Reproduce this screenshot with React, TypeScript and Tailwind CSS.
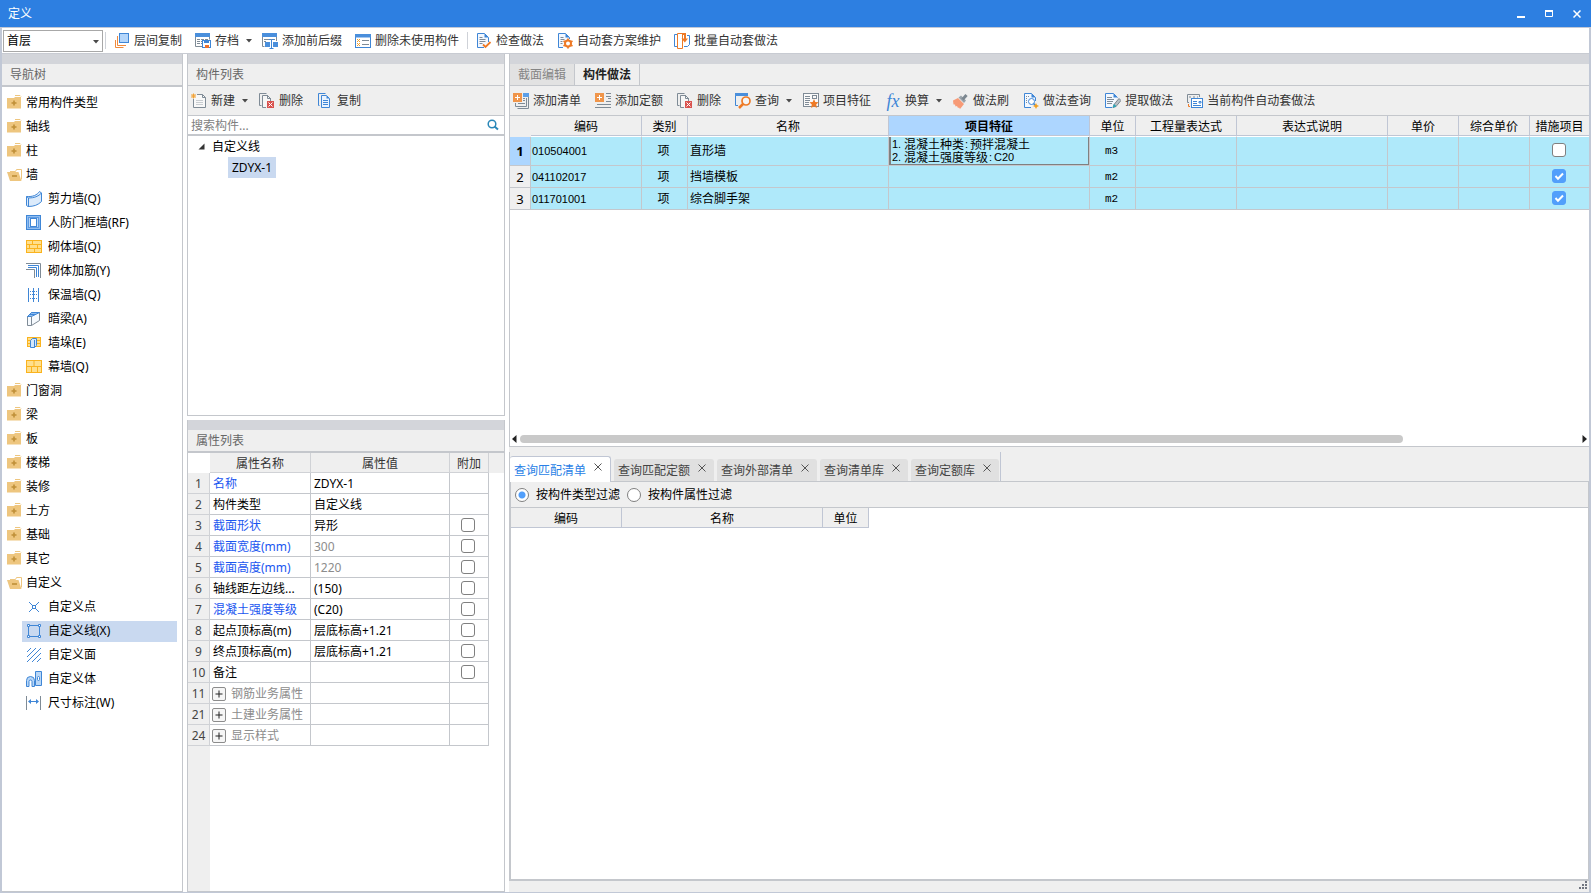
import React, { useState } from 'react';

const BLUE = '#3f86d6';
const GRAY = '#7f8b96';
const ORANGE = '#f08a3c';

type IconProps = { children: React.ReactNode; size?: number };

function Icon({ children, size = 16 }: IconProps) {
  return (
    <svg width={size} height={size} viewBox="0 0 16 16" fill="none" className="shrink-0" aria-hidden="true">
      {children}
    </svg>
  );
}

/* ---------- toolbar icons ---------- */

const LayerCopyIcon = () => (
  <Icon>
    <path d="M3.500 3v9.500h8.500M1.500 7v7.500h8" stroke={ORANGE} />
    <rect x="5.500" y="0.500" width="9" height="9" fill="#b4d6fb" stroke={BLUE} />
  </Icon>
);

const ArchiveIcon = () => (
  <Icon>
    <path d="M0 0h15v4H0z" fill="#4a8fdc" />
    <path d="M0.500 4v9.500h7M14.500 4v2.500" stroke={GRAY} />
    <path d="M2 6.500h3M6 6.500h3M10 6.500h3M2 8.500h3M2 10.500h3M6 8.500h1M6 10.500h1" stroke={GRAY} />
    <rect x="7.500" y="7.500" width="8" height="7" fill="#fff" stroke={BLUE} />
    <path d="M9 8h5v2H9z" fill={BLUE} />
    <path d="M10 12h4v3h-4z" fill="#f0702a" />
  </Icon>
);

const PrefixIcon = () => (
  <Icon>
    <path d="M0 0h15v4H0z" fill="#4a8fdc" />
    <path d="M0.500 4v9.500h2M14.500 4v4" stroke={GRAY} />
    <path d="M2 6.500h5M2 8.500h2M9 6.500h4" stroke={GRAY} />
    <path d="M3 9h5v5H3zM11 9h5v5h-5z" fill="#4a8fdc" />
    <path d="M9.500 7v8M7 6.500h2M10 6.500h2M7.500 15.500h4" stroke={BLUE} />
  </Icon>
);

const UnusedIcon = () => (
  <Icon>
    <rect x="0.500" y="1.500" width="15" height="13" fill="#fff" stroke={BLUE} />
    <path d="M0 1h16v3.500H0z" fill="#4a8fdc" />
    <path d="M2 6l3 3M5 6L2 9M2 10l3 3M5 10l-3 3" stroke="#f0a030" />
    <path d="M7 7.500h7M7 11.500h7" stroke={GRAY} />
  </Icon>
);

const CheckDocIcon = () => (
  <Icon>
    <path d="M8 14.500H1.500v-14h7l4 4V9" fill="#f3f8ff" stroke={BLUE} />
    <path d="M8.500 0.500v4h4z" fill={BLUE} />
    <path d="M3.500 4.500h3M3.500 6.500h6M3.500 8.500h6M3.500 10.500h3" stroke={GRAY} />
    <path d="M7 11.500l2.500 2.500 5-5" stroke="#ee7a26" strokeWidth="1.800" />
  </Icon>
);

const GearDocIcon = () => (
  <Icon>
    <path d="M6 14.500H1.500v-14h7l4 4V6" fill="#f3f8ff" stroke={BLUE} />
    <path d="M8.500 0.500v4h4z" fill={BLUE} />
    <path d="M3.500 4.500h3M3.500 6.500h4M3.500 8.500h2M3.500 10.500h2" stroke={GRAY} />
    <circle cx="11" cy="10.500" r="3" fill="#fff" stroke="#ee7a26" strokeWidth="2" />
    <path d="M11 5.500v2M11 13.500v2M6.500 8l1.800 1M13.700 12l1.800 1M6.500 13l1.800-1M13.700 9l1.800-1" stroke="#ee7a26" strokeWidth="1.800" />
  </Icon>
);

const BatchIcon = () => (
  <Icon>
    <path d="M4 1.500H0.500v12H4" stroke={BLUE} />
    <path d="M3.500 0.500h5v15h-5z" stroke="#ee7a26" fill="#fff" />
    <path d="M10 13.500h3.500l2-2v-9H13" stroke={BLUE} />
    <path d="M8 1h3V6" stroke="#ee7a26" strokeWidth="2" />
    <path d="M7.500 5.500h6.500L10.800 9.500z" fill="#ee7a26" />
  </Icon>
);

const NewIcon = () => (
  <Icon>
    <path d="M6 1.500h5.500l3 3v10h-12V6" fill="#f8f8f8" stroke={GRAY} />
    <path d="M11.500 1.500v3h3" stroke={GRAY} />
    <path d="M5 7.500h7M5 9.500h7M5 11.500h7" stroke="#c8ccd0" />
    <path d="M0.500 1l4 4M4.500 1l-4 4M2.500 0.500v5M0 3h5" stroke="#f3a234" />
  </Icon>
);

const DeleteIcon = () => (
  <Icon>
    <path d="M2.500 12.500h-2v-12h7" stroke={GRAY} />
    <path d="M7 14.500H3.500v-12h5l3 3V8" fill="#f6f6f6" stroke={GRAY} />
    <path d="M8.500 2v3.500H12" stroke={GRAY} />
    <path d="M8 8h7v7H8z" fill="#d9534f" />
    <path d="M9.500 9.500l4 4M13.500 9.500l-4 4" stroke="#fff" />
  </Icon>
);

const CopyIcon = () => (
  <Icon>
    <path d="M2.500 12.500h-1v-12h7" stroke={BLUE} />
    <path d="M4.500 2.500h5l3 3v9h-8z" fill="#e9f3ff" stroke={BLUE} />
    <path d="M9.500 2.500v3h3z" fill={BLUE} />
    <path d="M6 7.500h5M6 9.500h5M6 11.500h5" stroke={BLUE} />
  </Icon>
);

const AddListIcon = () => (
  <Icon>
    <path d="M10 0h6v4h-6z" fill="#5b9fe8" />
    <path d="M15.500 4v11.500h-11M13.500 5v8.500h-11V10" stroke={GRAY} />
    <path d="M10 5.500h2M10 7.500h2M5 10.500h7" stroke={GRAY} />
    <path d="M0 0h9v9H0z" fill="#f0954a" />
    <path d="M4.500 2v5M2 4.500h5" stroke="#fff" />
  </Icon>
);

const AddQuotaIcon = () => (
  <Icon>
    <path d="M11 0.500h5M11 3.500h5M13 5.500h3M11 8.500h5M2 11.500h14M0 14.500h16" stroke={GRAY} />
    <path d="M0 0h9v9H0z" fill="#f0954a" />
    <path d="M4.500 2v5M2 4.500h5" stroke="#fff" />
  </Icon>
);

const QueryIcon = () => (
  <Icon>
    <path d="M0 0h13v3H0z" fill="#4a8fdc" />
    <path d="M0.500 3v9.500H3" stroke={BLUE} />
    <circle cx="11" cy="8" r="4" stroke="#ee7a26" strokeWidth="1.700" fill="#f6f6f6" />
    <path d="M8 11L4 15" stroke="#ee7a26" strokeWidth="2.500" />
  </Icon>
);

const FeatureIcon = () => (
  <Icon>
    <rect x="0.500" y="0.500" width="15" height="13" fill="#fafafa" stroke={GRAY} />
    <path d="M2 3.500h5M2 5.500h5M2 7.500h5M2 9.500h4M2 11.500h4" stroke={GRAY} />
    <rect x="9.500" y="2.500" width="4" height="3" stroke={GRAY} />
    <path d="M11 6l1.300 3 3.300.3-2.400 2.300.7 3.400L11 13.300 8.100 15l.7-3.400L6.400 9.300 9.700 9z" fill="#ee7a26" />
  </Icon>
);

const BrushIcon = () => (
  <Icon>
    <path d="M0 7.500L5 5l6 6-4 5-1-1.500-1 .5-1-2-1.500.500-.5-2-1.500 0z" fill="#f79a76" />
    <path d="M5.500 4.500L8 2.500l5 5-2 2.500z" fill="#9aa3ab" />
    <path d="M9.500 6.500l4-4.500" stroke="#7c8790" strokeWidth="3" />
  </Icon>
);

const MethodQueryIcon = () => (
  <Icon>
    <path d="M8 14.500H1.500v-14h7l4 4V8" fill="#f3f8ff" stroke={BLUE} />
    <path d="M8.500 0.500v4h4z" fill={BLUE} />
    <path d="M3 3.500h4M3 5.500h2M3 7.500h2M3 9.500h2" stroke={GRAY} strokeDasharray="1 1" />
    <circle cx="8.500" cy="8.500" r="3" stroke={BLUE} fill="#fff" />
    <path d="M10.500 10.500l2 2" stroke={BLUE} strokeWidth="1.500" />
    <path d="M13 10l1 2 2 1-2 1-1 2-1-2-2-1 2-1z" fill="#f3a020" />
  </Icon>
);

const ExtractIcon = () => (
  <Icon>
    <path d="M7 14.500H0.500v-14h8l4 4" fill="#f3f8ff" stroke={BLUE} />
    <path d="M8.500 0.500v4h4z" fill={BLUE} />
    <path d="M2 4.500h5M2 6.500h7M2 8.500h6M2 10.500h5" stroke={GRAY} />
    <path d="M8 14.500l1-3 5-6 2 2-5 6z" fill="#b9c0c6" stroke="#68737d" strokeWidth="0.800" />
    <path d="M7.500 15l1.500-4 2.500 2.200z" fill="#27a5b8" />
  </Icon>
);

const CurrentAutoIcon = () => (
  <Icon>
    <path d="M2 9.500H0.500v-8h12V4M2 4h2M6 4h2M10 4h1" stroke={GRAY} />
    <path d="M1.500 11v2.500h1.500" stroke="#ee7a26" />
    <rect x="4.500" y="5.500" width="11" height="9" fill="#fff" stroke={BLUE} />
    <path d="M6 8.500h4M6 10.500h4M6 12.500h8M12 8.500h2v1.500h-2z" stroke={BLUE} />
  </Icon>
);

const FxIcon = () => (
  <span className="w-4 text-center font-['Liberation_Serif',serif] text-[18px] leading-4 text-[#3f86d6] italic">fx</span>
);

/* ---------- navigation icons ---------- */

const FolderClosed = () => (
  <Icon>
    <path d="M8 0.500h5l1 1" stroke="#eec67f" />
    <path d="M0 3h7l1-1h6v11.500H0z" fill="#eec67f" />
    <path d="M7 5.500v5M4.500 8h5" stroke="#bf8f38" strokeWidth="1.600" />
  </Icon>
);

const FolderOpen = () => (
  <Icon>
    <path d="M3 4.500h5.500l1-2h5v10" stroke="#eec67f" />
    <path d="M0 5h11.500l3 9H3z" fill="#eec67f" />
    <path d="M5 9h5" stroke="#bf8f38" strokeWidth="1.600" />
  </Icon>
);

const ShearWallIcon = () => (
  <Icon>
    <path d="M0.500 5.500C7 6 11 4 13.500 0.500l2 1.500v8.500C12 14 8 15.500 2 15.500l-1.500-1z" fill="#dcebfb" stroke={BLUE} />
    <path d="M0.500 5.500l2 1.500C8 7 12.500 5.500 15.500 2M2.500 7v8" stroke={BLUE} />
  </Icon>
);

const FrameWallIcon = () => (
  <Icon>
    <rect x="0.500" y="0.500" width="14" height="14" fill="#8fbdf0" stroke={BLUE} />
    <rect x="2.500" y="2.500" width="10" height="10" fill="#b9d7f7" stroke="#5d9ae2" />
    <rect x="4.500" y="3.500" width="6" height="8" fill="#fff" stroke={BLUE} />
  </Icon>
);

const BrickWallIcon = () => (
  <Icon>
    <rect x="0.500" y="1.500" width="15" height="12" fill="#ffdf8c" stroke="#fab31e" />
    <path d="M0 5.500h16M0 9.500h16M6.500 1.500v4M11.500 5.500v4M3.500 5.500v4M8.500 9.500v4" stroke="#fab31e" />
  </Icon>
);

const RebarIcon = () => (
  <Icon>
    <path d="M0 0.500h14.500V15M0 6.500h8.500V15" stroke={GRAY} />
    <path d="M2 2.500h10.500V14M2 4.500h8.500V14" stroke={BLUE} />
  </Icon>
);

const InsulationIcon = () => (
  <Icon>
    <path d="M2.500 1v14M7.500 1v14M12.500 1v14" stroke={BLUE} />
    <path d="M4 4.500h8M4 7.500h8M4 11.500h8" stroke={BLUE} strokeDasharray="1 1" />
  </Icon>
);

const HiddenBeamIcon = () => (
  <Icon>
    <path d="M1.500 5.500L5.500 1.500h8v8L5.500 14.500h-4z" fill="#f6fafe" stroke={GRAY} />
    <path d="M1.500 5.500L5.500 1.500h8L5.500 5.500z" fill="#8fbdf0" stroke={BLUE} />
    <path d="M5.500 5.500v9" stroke={GRAY} />
    <path d="M3.500 3.500h6" stroke={BLUE} />
  </Icon>
);

const PierIcon = () => (
  <Icon>
    <rect x="1.500" y="2.500" width="13" height="9" fill="#ffdf8c" stroke="#fab31e" />
    <path d="M2 5.500h12M2 8.500h12" stroke="#fab31e" />
    <path d="M4.500 5.500L6.500 3.500h4v7l-2 2h-4z" fill="#d4e7fb" stroke={BLUE} />
    <path d="M8.500 5v7.500" stroke={BLUE} />
  </Icon>
);

const CurtainIcon = () => (
  <Icon>
    <rect x="0.500" y="1.500" width="15" height="12" fill="#ffdf8c" stroke="#fab31e" />
    <path d="M0 7.500h16M8 1.500v6M5.500 7.500v6M11.500 7.500v6" stroke="#fab31e" />
  </Icon>
);

const PointIcon = () => (
  <Icon>
    <path d="M3 3l3.500 3.500M13 3L9.500 6.500M3 13l3.500-3.500M13 13L9.500 9.500" stroke={BLUE} />
    <rect x="6.500" y="6.500" width="3" height="3" stroke={BLUE} />
  </Icon>
);

const LineIcon = () => (
  <Icon>
    <path d="M2.500 3.500v9M13.500 3.500v9M4 2.500h8M4 13.500h8" stroke={BLUE} />
    <path d="M1.500 1.500h2v2h-2zM12.500 1.500h2v2h-2zM1.500 12.500h2v2h-2zM12.500 12.500h2v2h-2z" stroke={BLUE} fill="#fff" />
  </Icon>
);

const AreaIcon = () => (
  <Icon>
    <path d="M1 5l4-4M1 10l9-9M1 15L15 1M6 15l9-9M11 15l4-4" stroke={BLUE} />
  </Icon>
);

const BodyIcon = () => (
  <Icon>
    <path d="M0.500 15.500v-6a4 4 0 018 0v6h-2.500v-5a1.500 1.500 0 00-3 0v5z" fill="#b9d7f7" stroke={BLUE} />
    <path d="M9.500 0.500h6v14h-6z" fill="#b9d7f7" stroke={BLUE} />
    <rect x="11.500" y="5.500" width="2" height="4" rx="1" fill="#fff" stroke={BLUE} />
  </Icon>
);

const DimensionIcon = () => (
  <Icon>
    <path d="M0.500 1v14M14.500 1v14" stroke={GRAY} />
    <path d="M3 6.500h9" stroke={BLUE} />
    <path d="M2 6.500L5 4v5zM13 6.500L10 4v5z" fill={BLUE} />
  </Icon>
);

/* ---------- shared controls ---------- */

function Caret() {
  return (
    <svg width="6" height="4" viewBox="0 0 6 4" className="-mr-[3px] ml-[3px] shrink-0" aria-hidden="true">
      <path d="M0 0h6L3 3.500z" fill="#4a4a4a" />
    </svg>
  );
}

type Tool = { label: string; icon: React.ReactNode; caret?: boolean };

function ToolButton({ label, icon, caret }: Tool) {
  return (
    <button type="button" className="flex h-6 shrink-0 items-center gap-1 text-[#333] hover:bg-[#dbe8f8]">
      {icon}
      <span>{label}</span>
      {caret && <Caret />}
    </button>
  );
}

function CheckBox({ label, defaultChecked = false }: { label: string; defaultChecked?: boolean }) {
  return (
    <label className="relative mx-auto block size-[14px]">
      <input
        type="checkbox"
        aria-label={label}
        defaultChecked={defaultChecked}
        className="peer block size-[14px] appearance-none rounded-[3px] border border-[#808080] bg-white checked:border-[#529ffb] checked:bg-[#529ffb]"
      />
      <svg viewBox="0 0 14 14" className="pointer-events-none absolute inset-0 hidden peer-checked:block" fill="none" aria-hidden="true">
        <path d="M3.500 7l2.500 2.800L11 4.500" stroke="#fff" strokeWidth="2" />
      </svg>
    </label>
  );
}

function PanelHeader({ title }: { title: string }) {
  return (
    <header className="shrink-0">
      <div className="h-[10px] bg-[#d3d5da]" />
      <h2 className="flex h-[21px] items-center bg-[#efefef] px-2 text-[#666]">{title}</h2>
    </header>
  );
}

/* ---------- navigation ---------- */

type NavGroup = { label: string; children?: { label: string; icon: React.ReactNode }[] };

const navGroups: NavGroup[] = [
  { label: '常用构件类型' },
  { label: '轴线' },
  { label: '柱' },
  {
    label: '墙',
    children: [
      { label: '剪力墙(Q)', icon: <ShearWallIcon /> },
      { label: '人防门框墙(RF)', icon: <FrameWallIcon /> },
      { label: '砌体墙(Q)', icon: <BrickWallIcon /> },
      { label: '砌体加筋(Y)', icon: <RebarIcon /> },
      { label: '保温墙(Q)', icon: <InsulationIcon /> },
      { label: '暗梁(A)', icon: <HiddenBeamIcon /> },
      { label: '墙垛(E)', icon: <PierIcon /> },
      { label: '幕墙(Q)', icon: <CurtainIcon /> },
    ],
  },
  { label: '门窗洞' },
  { label: '梁' },
  { label: '板' },
  { label: '楼梯' },
  { label: '装修' },
  { label: '土方' },
  { label: '基础' },
  { label: '其它' },
  {
    label: '自定义',
    children: [
      { label: '自定义点', icon: <PointIcon /> },
      { label: '自定义线(X)', icon: <LineIcon /> },
      { label: '自定义面', icon: <AreaIcon /> },
      { label: '自定义体', icon: <BodyIcon /> },
      { label: '尺寸标注(W)', icon: <DimensionIcon /> },
    ],
  },
];

function NavTree() {
  const [selected, setSelected] = useState('自定义线(X)');
  return (
    <nav className="flex w-[181px] shrink-0 flex-col border-r border-b border-[#c4c7cc]">
      <PanelHeader title="导航树" />
      <div className="flex-1 border-t-2 border-[#c4c7cc] pt-1">
        {navGroups.map((group) => (
          <div key={group.label}>
            <button type="button" className="flex h-6 w-full items-center gap-[3px] pl-[5px] text-left">
              {group.children ? <FolderOpen /> : <FolderClosed />}
              {group.label}
            </button>
            {group.children?.map((item) => (
              <div key={item.label} className="flex h-6 items-center pr-[5px] pl-5">
                <button
                  type="button"
                  onClick={() => setSelected(item.label)}
                  className={`flex h-[21px] w-full items-center gap-[6px] pl-1 text-left ${selected === item.label ? 'bg-[#c9d9f0]' : ''}`}
                >
                  {item.icon}
                  {item.label}
                </button>
              </div>
            ))}
          </div>
        ))}
      </div>
    </nav>
  );
}

/* ---------- component list ---------- */

function ComponentList() {
  return (
    <section className="flex h-[362px] shrink-0 flex-col border-x border-b border-[#c4c7cc]">
      <PanelHeader title="构件列表" />
      <div className="flex h-[31px] items-center gap-[14px] border-y border-[#c4c7cc] bg-[#efefef] px-[3px]">
        <ToolButton label="新建" icon={<NewIcon />} caret />
        <ToolButton label="删除" icon={<DeleteIcon />} />
        <ToolButton label="复制" icon={<CopyIcon />} />
      </div>
      <div className="flex h-5 items-center border-b-2 border-[#c4c7cc] pr-[5px] pl-[3px]">
        <input
          type="text"
          aria-label="搜索构件"
          placeholder="搜索构件..."
          className="min-w-0 flex-1 pt-[2px] leading-4 outline-none placeholder:text-[#808080]"
        />
        <button type="button" aria-label="搜索">
          <svg width="12" height="12" viewBox="0 0 12 12" fill="none" aria-hidden="true">
            <circle cx="5" cy="5" r="3.800" stroke="#2a87b8" strokeWidth="1.500" />
            <path d="M7.500 7.500l3.500 3" stroke="#2a87b8" strokeWidth="2" />
          </svg>
        </button>
      </div>
      <div className="flex flex-col items-start">
        <button type="button" className="flex h-[21px] items-center gap-[7px] pl-[10px]">
          <svg width="7" height="7" viewBox="0 0 7 7" aria-hidden="true">
            <path d="M6.500 0.500v6h-6z" fill="#333" />
          </svg>
          自定义线
        </button>
        <button type="button" className="ml-10 flex h-[21px] items-center bg-[#c9d9f0] px-1">
          ZDYX-1
        </button>
      </div>
    </section>
  );
}

/* ---------- property list ---------- */

type Property = { no: number; name: string; value?: string; kind?: 'link' | 'group'; dim?: boolean; extra?: boolean };

const properties: Property[] = [
  { no: 1, name: '名称', value: 'ZDYX-1', kind: 'link' },
  { no: 2, name: '构件类型', value: '自定义线' },
  { no: 3, name: '截面形状', value: '异形', kind: 'link', extra: true },
  { no: 4, name: '截面宽度(mm)', value: '300', kind: 'link', dim: true, extra: true },
  { no: 5, name: '截面高度(mm)', value: '1220', kind: 'link', dim: true, extra: true },
  { no: 6, name: '轴线距左边线...', value: '(150)', extra: true },
  { no: 7, name: '混凝土强度等级', value: '(C20)', kind: 'link', extra: true },
  { no: 8, name: '起点顶标高(m)', value: '层底标高+1.21', extra: true },
  { no: 9, name: '终点顶标高(m)', value: '层底标高+1.21', extra: true },
  { no: 10, name: '备注', extra: true },
  { no: 11, name: '钢筋业务属性', kind: 'group' },
  { no: 21, name: '土建业务属性', kind: 'group' },
  { no: 24, name: '显示样式', kind: 'group' },
];

function PropertyList() {
  return (
    <section className="flex flex-1 flex-col border-x border-b border-[#c4c7cc]">
      <PanelHeader title="属性列表" />
      <div className="flex flex-1 flex-col border-t-2 border-[#c4c7cc]">
        <div className="flex">
          <table className="w-[301px] table-fixed border-separate border-spacing-0">
            <colgroup>
              <col className="w-[22px]" />
              <col className="w-[101px]" />
              <col className="w-[139px]" />
              <col className="w-[39px]" />
            </colgroup>
            <thead>
              <tr className="text-[#333]">
                <th className="h-5 bg-white p-0" aria-label="序号" />
                {['属性名称', '属性值', '附加'].map((title) => (
                  <th key={title} className="h-5 border-r border-b border-[#d0d2d6] bg-[#efefef] p-0 pt-[2px] font-normal">
                    {title}
                  </th>
                ))}
              </tr>
            </thead>
            <tbody>
              {properties.map((p) => (
                <tr key={p.no}>
                  <th scope="row" className="h-[21px] border-r border-b border-[#d0d2d6] bg-[#efefef] p-0 pt-[2px] font-normal text-[#444]">
                    {p.no}
                  </th>
                  <td
                    className={`border-r border-b border-[#c4c7cc] p-0 pt-[2px] pl-[3px] whitespace-nowrap ${
                      p.kind === 'link' ? 'text-[#1a56f0]' : p.kind === 'group' ? 'text-[#8c8c8c]' : ''
                    }`}
                  >
                    {p.kind === 'group' ? (
                      <span className="flex items-center gap-[5px]">
                        <button
                          type="button"
                          aria-label={`展开${p.name}`}
                          className="-mt-px -ml-px flex size-[14px] items-center justify-center rounded-[2px] border border-[#8c8c8c] bg-[#f6f6f6]"
                        >
                          <svg width="8" height="8" viewBox="0 0 8 8" aria-hidden="true">
                            <path d="M4 0.500v7M0.500 4h7" stroke="#222" />
                          </svg>
                        </button>
                        {p.name}
                      </span>
                    ) : (
                      p.name
                    )}
                  </td>
                  <td className={`border-r border-b border-[#c4c7cc] p-0 pt-[2px] pl-[3px] ${p.dim ? 'text-[#8c8c8c]' : ''}`}>{p.value}</td>
                  <td className="border-r border-b border-[#c4c7cc] p-0 pr-[2px]">{p.extra && <CheckBox label={`附加 ${p.name}`} />}</td>
                </tr>
              ))}
            </tbody>
          </table>
          <div className="h-5 flex-1 bg-[#efefef]" />
        </div>
        <div className="w-[22px] flex-1 bg-[#efefef]" />
      </div>
    </section>
  );
}

/* ---------- bill table ---------- */

const methodTools: Tool[] = [
  { label: '添加清单', icon: <AddListIcon /> },
  { label: '添加定额', icon: <AddQuotaIcon /> },
  { label: '删除', icon: <DeleteIcon /> },
  { label: '查询', icon: <QueryIcon />, caret: true },
  { label: '项目特征', icon: <FeatureIcon /> },
  { label: '换算', icon: <FxIcon />, caret: true },
  { label: '做法刷', icon: <BrushIcon /> },
  { label: '做法查询', icon: <MethodQueryIcon /> },
  { label: '提取做法', icon: <ExtractIcon /> },
  { label: '当前构件自动套做法', icon: <CurrentAutoIcon /> },
];

const billColumns = ['编码', '类别', '名称', '项目特征', '单位', '工程量表达式', '表达式说明', '单价', '综合单价', '措施项目'];

type Feature = { no: string; name: string; value: string };
type Bill = { code: string; name: string; unit: string; measure: boolean; features?: Feature[] };

const bills: Bill[] = [
  {
    code: '010504001',
    name: '直形墙',
    unit: 'm3',
    measure: false,
    features: [
      { no: '1.', name: '混凝土种类', value: '预拌混凝土' },
      { no: '2.', name: '混凝土强度等级', value: 'C20' },
    ],
  },
  { code: '041102017', name: '挡墙模板', unit: 'm2', measure: true },
  { code: '011701001', name: '综合脚手架', unit: 'm2', measure: true },
];

const narrow = "font-['Liberation_Sans','Noto_Sans_CJK_SC',sans-serif] text-[11px]";

function BillTable() {
  return (
    <table className="w-full table-fixed border-separate border-spacing-0">
      <colgroup>
        <col className="w-[21px]" />
        <col className="w-[111px]" />
        <col className="w-[46px]" />
        <col className="w-[201px]" />
        <col className="w-[201px]" />
        <col className="w-[46px]" />
        <col className="w-[101px]" />
        <col className="w-[151px]" />
        <col className="w-[71px]" />
        <col className="w-[71px]" />
        <col />
      </colgroup>
      <thead>
        <tr>
          <th className="h-[21px] bg-[#efefef] p-0" aria-label="序号" />
          {billColumns.map((title) => (
            <th
              key={title}
              className={`h-[21px] border-r border-b border-r-[#c0c6d4] border-b-white p-0 pt-[2px] whitespace-nowrap shadow-[inset_0_-1px_0_#c0c6d4] last:border-r-0 ${
                title === '项目特征' ? 'bg-[#add6ff] font-bold' : 'bg-[#efefef] font-normal'
              }`}
            >
              {title}
            </th>
          ))}
        </tr>
      </thead>
      <tbody className="[&_td]:border-r [&_td]:border-b [&_td]:border-[#c4c7cc] [&_td]:bg-[#afe9fa] [&_td]:p-0 [&_td:last-child]:border-r-0">
        {bills.map((bill, i) => (
          <tr key={bill.code} className={i === 0 ? 'h-[29px]' : 'h-[22px]'}>
            <th
              scope="row"
              className={`border-r border-b border-[#c4c7cc] p-0 text-[13px] ${i === 0 ? 'bg-[#add6ff] font-bold' : 'bg-[#efefef] font-normal'}`}
            >
              {i + 1}
            </th>
            <td>
              <span className={`block pl-px ${narrow}`}>{bill.code}</span>
            </td>
            <td>
              <span className="block pr-[2px] text-center">项</span>
            </td>
            <td>
              <span className="block pl-[2px]">{bill.name}</span>
            </td>
            <td className={bill.features ? 'shadow-[inset_2px_-1px_0_#808080,inset_-1px_0_0_#808080]' : ''}>
              {bill.features?.map((feature) => (
                <div key={feature.no} className="flex h-[13px] items-center pl-[3px] leading-[13px]">
                  <span className={`w-3 ${narrow}`}>{feature.no}</span>
                  <span>{feature.name}</span>
                  <span className={`w-[6px] pl-px ${narrow}`}>:</span>
                  <span className={/^\w+$/.test(feature.value) ? narrow : ''}>{feature.value}</span>
                </div>
              ))}
            </td>
            <td>
              <span className="block pr-[2px] text-center font-['Liberation_Mono',monospace] text-[11px]">{bill.unit}</span>
            </td>
            <td />
            <td />
            <td />
            <td />
            <td>
              <div className="pr-[2px] pb-[2px]">
                <CheckBox label={`措施项目 ${bill.name}`} defaultChecked={bill.measure} />
              </div>
            </td>
          </tr>
        ))}
      </tbody>
    </table>
  );
}

function MethodPanel() {
  return (
    <section className="flex h-[393px] shrink-0 flex-col border-b border-l border-[#c4c7cc]">
      <div className="h-[10px] shrink-0 bg-[#d3d5da]" />
      <div role="tablist" className="flex h-[22px] shrink-0 border-b border-[#c4c7cc] bg-[#efefef]">
        <button type="button" role="tab" aria-selected="false" className="border-r border-[#c4c7cc] bg-[#e2e2e2] px-2 text-[#858585]">
          截面编辑
        </button>
        <button type="button" role="tab" aria-selected="true" className="border-r border-[#c4c7cc] px-2 font-bold text-[#222]">
          构件做法
        </button>
      </div>
      <div className="flex h-[30px] shrink-0 items-center gap-[14px] border-b border-[#c4c7cc] bg-[#efefef] px-[3px]">
        {methodTools.map((tool) => (
          <ToolButton key={tool.label} {...tool} />
        ))}
      </div>
      <div className="flex-1">
        <BillTable />
      </div>
      <div className="flex h-[14px] shrink-0 items-center gap-[3px] px-[2px]">
        <button type="button" aria-label="向左滚动">
          <svg width="5" height="8" viewBox="0 0 5 8" className="block" aria-hidden="true">
            <path d="M4.500 0v8L0 4z" fill="#222" />
          </svg>
        </button>
        <div className="flex-1">
          <div className="h-2 w-5/6 rounded-full bg-[#c9c9c9]" />
        </div>
        <button type="button" aria-label="向右滚动">
          <svg width="5" height="8" viewBox="0 0 5 8" className="block" aria-hidden="true">
            <path d="M0.500 0v8L5 4z" fill="#222" />
          </svg>
        </button>
      </div>
    </section>
  );
}

/* ---------- query panel ---------- */

const queryTabs = ['查询匹配清单', '查询匹配定额', '查询外部清单', '查询清单库', '查询定额库'];

function QueryPanel() {
  const [active, setActive] = useState(queryTabs[0]);
  return (
    <section className="mt-[5px] flex flex-1 flex-col">
      <div className="flex h-[30px] shrink-0 border-b border-l border-[#c4c7cc]">
        <div role="tablist" className="flex items-end gap-[3px] border-r border-[#c0c6d4] pr-px">
          {queryTabs.map((tab) => (
            <div
              key={tab}
              className={`flex items-center rounded-t-[3px] pr-2 pl-1 ${
                tab === active
                  ? '-mb-px h-[26px] border-t border-r border-[#c0c6d4] bg-white text-[#2a7fe6]'
                  : 'h-[22px] bg-[#e0e0e0] text-[#444]'
              }`}
            >
              <button type="button" role="tab" aria-selected={tab === active} onClick={() => setActive(tab)} className="pt-[2px]">
                {tab}
              </button>
              <button type="button" aria-label={`关闭${tab}`} className="ml-2 pb-[5px]">
                <svg width="8" height="8" viewBox="0 0 8 8" className="block" aria-hidden="true">
                  <path d="M0.500 0.500l7 7M7.500 0.500l-7 7" stroke="#555" />
                </svg>
              </button>
            </div>
          ))}
        </div>
      </div>
      <div className="flex flex-1 flex-col border-r border-b-2 border-l-2 border-[#c4c7cc] bg-white">
        <div className="flex h-[26px] shrink-0 items-center gap-[7px] border-b border-[#c4c7cc] bg-[#efefef] pl-1">
          {['按构件类型过滤', '按构件属性过滤'].map((label, i) => (
            <label key={label} className="flex items-center gap-[7px]">
              <input
                type="radio"
                name="filter"
                defaultChecked={i === 0}
                className="size-[14px] appearance-none rounded-full border border-[#808080] bg-white checked:bg-[radial-gradient(circle,#529ffb_3px,#fff_4px)]"
              />
              {label}
            </label>
          ))}
        </div>
        <table className="w-[358px] table-fixed border-separate border-spacing-0">
          <colgroup>
            <col className="w-[111px]" />
            <col className="w-[201px]" />
            <col className="w-[46px]" />
          </colgroup>
          <thead>
            <tr>
              {['编码', '名称', '单位'].map((title) => (
                <th key={title} className="h-5 border-r border-b border-[#c0c6d4] bg-[#efefef] p-0 pt-[2px] font-normal">
                  {title}
                </th>
              ))}
            </tr>
          </thead>
        </table>
      </div>
      <footer className="flex h-[11px] shrink-0 justify-end pr-[2px]">
        <svg width="8" height="8" viewBox="0 0 8 8" aria-hidden="true">
          <path d="M6 0h2v2H6zM3 3h2v2H3zM6 3h2v2H6zM0 6h2v2H0zM3 6h2v2H3zM6 6h2v2H6z" fill="#707580" />
        </svg>
      </footer>
    </section>
  );
}

/* ---------- window ---------- */

function Divider() {
  return <span className="h-[17px] w-px shrink-0 bg-[#cfd2d8]" />;
}

export default function App() {
  return (
    <div className="flex h-screen flex-col overflow-hidden bg-white font-['Noto_Sans','Noto_Sans_CJK_SC',sans-serif] text-[12px] leading-4 text-black">
      <div className="flex h-[27px] shrink-0 items-center justify-between bg-[#2d7fe1] pr-[10px] pl-2 text-white">
        <h1>定义</h1>
        <div className="flex items-center gap-5">
          <button type="button" aria-label="最小化">
            <svg width="8" height="8" viewBox="0 0 8 8" className="block" aria-hidden="true">
              <path d="M0 6h8v2H0z" fill="#fff" />
            </svg>
          </button>
          <button type="button" aria-label="最大化">
            <svg width="8" height="7" viewBox="0 0 8 7" className="block" fill="none" aria-hidden="true">
              <path d="M0.500 1v5.500h7V1" stroke="#fff" />
              <path d="M0 0h8v2H0z" fill="#fff" />
            </svg>
          </button>
          <button type="button" aria-label="关闭">
            <svg width="8" height="8" viewBox="0 0 8 8" className="block" fill="none" aria-hidden="true">
              <path d="M0.500 0.500l7 7M7.500 0.500l-7 7" stroke="#fff" strokeWidth="1.500" />
            </svg>
          </button>
        </div>
      </div>

      <div className="flex min-h-0 flex-1 flex-col border-x-2 border-t border-b border-[#c1c8d6]">
        <div className="flex h-[26px] shrink-0 items-center border-b border-[#c8cbd2] pl-px">
          <div className="relative">
            <select aria-label="楼层" className="block h-[22px] w-[100px] appearance-none border border-[#a8a8a8] bg-white pl-[3px] leading-4">
              <option>首层</option>
            </select>
            <svg width="6" height="4" viewBox="0 0 6 4" className="pointer-events-none absolute top-[10px] right-1" aria-hidden="true">
              <path d="M0 0h6L3 3.500z" fill="#4a4a4a" />
            </svg>
          </div>
          <div className="flex items-center gap-2 pl-[2px]">
            <Divider />
            <div className="flex gap-[13px]">
              <ToolButton label="层间复制" icon={<LayerCopyIcon />} />
              <ToolButton label="存档" icon={<ArchiveIcon />} caret />
              <ToolButton label="添加前后缀" icon={<PrefixIcon />} />
              <ToolButton label="删除未使用构件" icon={<UnusedIcon />} />
            </div>
            <Divider />
            <div className="flex gap-[13px]">
              <ToolButton label="检查做法" icon={<CheckDocIcon />} />
              <ToolButton label="自动套方案维护" icon={<GearDocIcon />} />
              <ToolButton label="批量自动套做法" icon={<BatchIcon />} />
            </div>
          </div>
        </div>

        <div className="flex min-h-0 flex-1 gap-1">
          <NavTree />
          <div className="flex w-[318px] shrink-0 flex-col gap-1">
            <ComponentList />
            <PropertyList />
          </div>
          <main className="flex min-w-0 flex-1 flex-col bg-[#efefef]">
            <div className="flex shrink-0 flex-col bg-white">
              <MethodPanel />
            </div>
            <QueryPanel />
          </main>
        </div>
      </div>
    </div>
  );
}
